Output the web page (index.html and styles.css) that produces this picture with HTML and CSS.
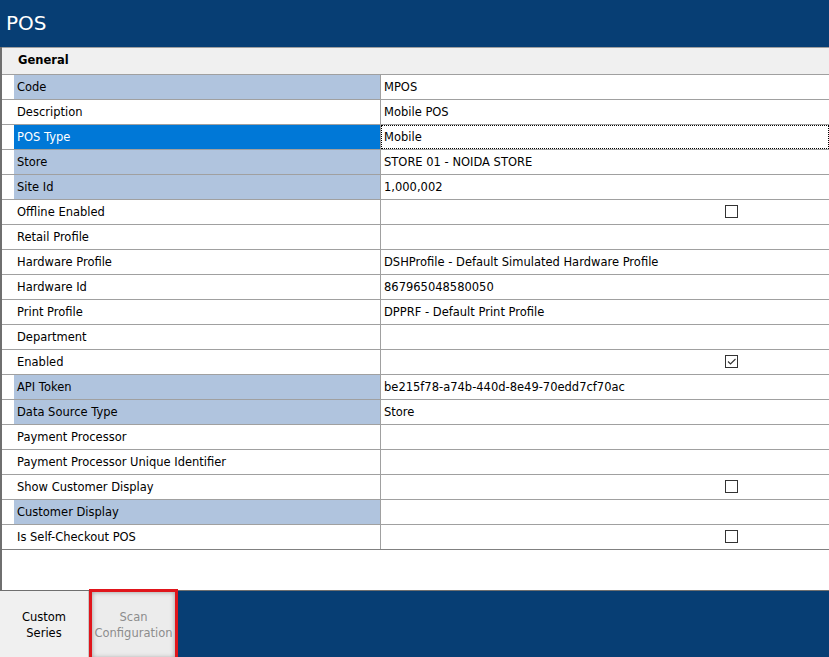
FILE: index.html
```html
<!DOCTYPE html>
<html>
<head>
<meta charset="utf-8">
<link rel="stylesheet" href="styles.css">
</head>
<body>
<div class="app">
  <div class="header">POS</div>
  <div class="main">
    <div class="grid">
      <div class="cat">General</div>
      <div class="row"><div class="ind"></div><div class="lbl hl">Code</div><div class="val">MPOS</div></div>
      <div class="row"><div class="ind"></div><div class="lbl">Description</div><div class="val">Mobile POS</div></div>
      <div class="row"><div class="ind"></div><div class="lbl sel">POS Type</div><div class="val focus">Mobile</div></div>
      <div class="row"><div class="ind"></div><div class="lbl hl">Store</div><div class="val">STORE 01 - NOIDA STORE</div></div>
      <div class="row"><div class="ind"></div><div class="lbl hl">Site Id</div><div class="val">1,000,002</div></div>
      <div class="row"><div class="ind"></div><div class="lbl">Offline Enabled</div><div class="val"><span class="cb"></span></div></div>
      <div class="row"><div class="ind"></div><div class="lbl">Retail Profile</div><div class="val"></div></div>
      <div class="row"><div class="ind"></div><div class="lbl">Hardware Profile</div><div class="val">DSHProfile - Default Simulated Hardware Profile</div></div>
      <div class="row"><div class="ind"></div><div class="lbl">Hardware Id</div><div class="val">867965048580050</div></div>
      <div class="row"><div class="ind"></div><div class="lbl">Print Profile</div><div class="val">DPPRF - Default Print Profile</div></div>
      <div class="row"><div class="ind"></div><div class="lbl">Department</div><div class="val"></div></div>
      <div class="row"><div class="ind"></div><div class="lbl">Enabled</div><div class="val"><span class="cb"><svg width="11" height="11" viewBox="0 0 11 11"><path d="M2 5.5 L4.5 8 L9.5 3" fill="none" stroke="#333" stroke-width="1.1"/></svg></span></div></div>
      <div class="row"><div class="ind"></div><div class="lbl hl">API Token</div><div class="val">be215f78-a74b-440d-8e49-70edd7cf70ac</div></div>
      <div class="row"><div class="ind"></div><div class="lbl hl">Data Source Type</div><div class="val">Store</div></div>
      <div class="row"><div class="ind"></div><div class="lbl">Payment Processor</div><div class="val"></div></div>
      <div class="row"><div class="ind"></div><div class="lbl">Payment Processor Unique Identifier</div><div class="val"></div></div>
      <div class="row"><div class="ind"></div><div class="lbl">Show Customer Display</div><div class="val"><span class="cb"></span></div></div>
      <div class="row"><div class="ind"></div><div class="lbl hl">Customer Display</div><div class="val"></div></div>
      <div class="row last"><div class="ind"></div><div class="lbl">Is Self-Checkout POS</div><div class="val"><span class="cb"></span></div></div>
    </div>
  </div>
  <div class="footer">
    <div class="tab">Custom<br>Series</div>
    <div class="tab marked">Scan<br>Configuration</div>
  </div>
</div>
</body>
</html>
```
FILE: styles.css
```css
* { box-sizing: border-box; }
html, body { margin: 0; padding: 0; }
body {
  width: 829px;
  height: 657px;
  overflow: hidden;
  font-family: "DejaVu Sans", Verdana, sans-serif;
  font-size: 11.5px;
  color: #000;
  background: #fff;
}
.app {
  display: flex;
  flex-direction: column;
  height: 657px;
}
.header {
  height: 47px;
  background: #073e74;
  color: #fff;
  font-size: 20px;
  line-height: 46px;
  padding-left: 6px;
}
.main {
  flex: 1;
  border-left: 2px solid #6f6f6f;
  background: #fff;
  border-bottom: 1px solid #6f6f6f;
}
.grid {
  display: flex;
  flex-direction: column;
}
.cat {
  height: 28px;
  border-top: 1px solid #a0a0a0;
  border-bottom: 1px solid #a0a0a0;
  background: #f0f0f0;
  font-weight: bold;
  padding-left: 16px;
  line-height: 25px;
}
.row {
  display: grid;
  grid-template-columns: 12px 367px 1fr;
  height: 25px;
  border-bottom: 1px solid #a0a0a0;
  line-height: 24px;
}
.row.last { border-bottom-color: #808080; }
.ind { background: #fff; }
.lbl {
  padding-left: 3px;
  border-right: 1px solid #a0a0a0;
  white-space: nowrap;
}
.lbl.hl { background: #b0c4de; }
.lbl.sel { background: #0078d7; color: #fff; }
.val {
  padding-left: 3px;
  white-space: nowrap;
  position: relative;
}
.val.focus {
  outline: 1px dotted #000;
  outline-offset: -1px;
}
.cb {
  position: absolute;
  left: 344px;
  top: 5px;
  width: 13px;
  height: 13px;
  border: 1px solid #333;
  background: #fff;
  display: flex;
  align-items: center;
  justify-content: center;
}
.footer {
  height: 66px;
  background: #073e74;
  display: flex;
  align-items: flex-start;
  overflow: visible;
}
.tab {
  width: 89px;
  height: 66px;
  background: #f0f0f0;
  border-right: 1px solid #c8c8c8;
  text-align: center;
  font-size: 11.5px;
  line-height: 16px;
  padding-top: 18px;
  color: #000;
}
.tab.marked {
  width: 89px;
  height: 72px;
  margin-top: -2px;
  border: 3px solid #e0151b;
  background: #ececec;
  color: #8c8c8c;
  box-shadow: inset 0 0 5px rgba(0,0,0,0.35);
  padding-top: 17px;
}
```
